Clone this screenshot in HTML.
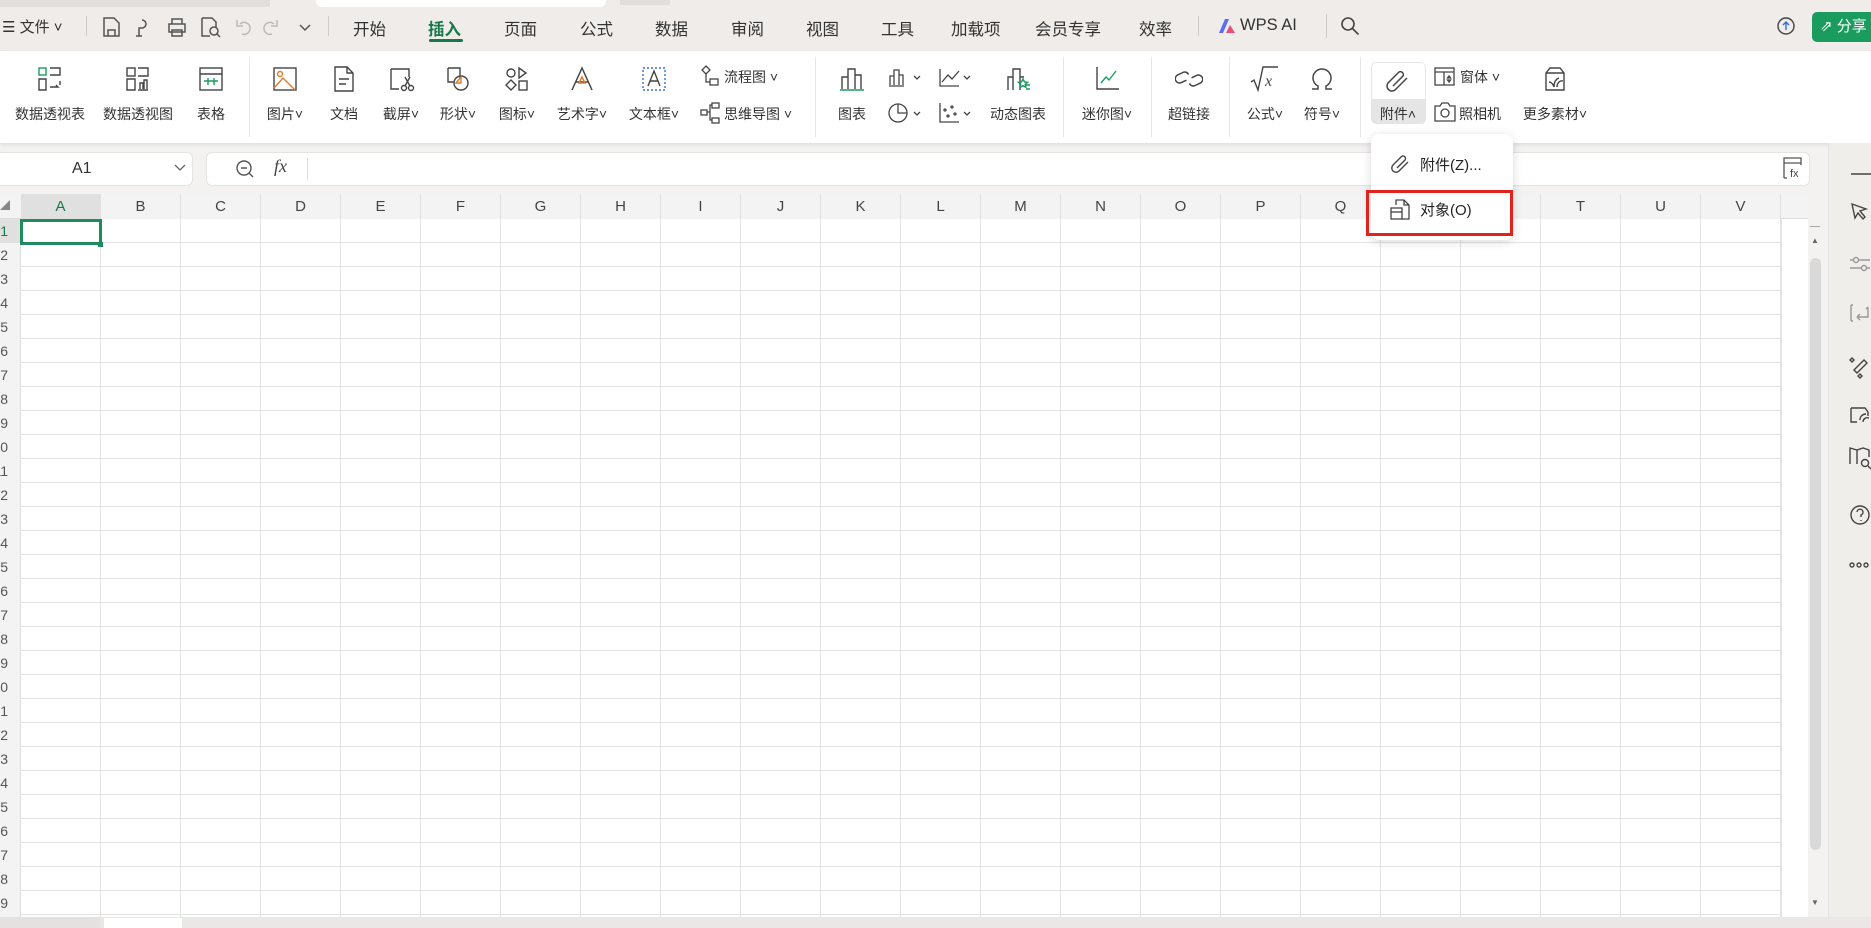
<!DOCTYPE html>
<html><head><meta charset="utf-8">
<style>
*{margin:0;padding:0;box-sizing:border-box}
body{width:1871px;height:928px;overflow:hidden;background:#f3f2f1;font-family:"Liberation Sans","Noto Sans CJK SC",sans-serif;color:#222;position:relative}
.abs{position:absolute}
#top{left:0;top:0;width:1871px;height:51px;background:#efece9}
.t{position:absolute;top:16px;font-size:16.5px;color:#333;white-space:nowrap}
#ribbon{left:0;top:51px;width:1871px;height:92px;background:#fff;box-shadow:0 2px 4px rgba(0,0,0,.08)}
.lbl{position:absolute;top:53px;font-size:14px;color:#333;white-space:nowrap;transform:translateX(-50%)}
.ic{position:absolute;top:14px;transform:translateX(-50%)}
.sep{position:absolute;top:6px;width:1px;height:80px;background:#e6e6e6}
svg{display:block}
.grid{left:21px;top:219px;width:1760px;height:698px;background-color:#fff;
background-image:linear-gradient(to right,#e3e3e3 1px,transparent 1px),linear-gradient(to bottom,#e3e3e3 1px,transparent 1px);
background-size:80px 24px;background-position:-1px -1px}
.ch{position:absolute;top:194px;height:25px;width:80px;text-align:center;font-size:15px;line-height:25px;color:#444;border-right:1px solid #e0e0e0;background:#f3f3f3}
.rh{position:absolute;left:-22px;width:30px;text-align:right;font-size:14px;color:#555;height:24px;line-height:24px}
</style></head><body>
<div id="top" class="abs">
  <div class="abs" style="left:0;top:0;width:270px;height:7px;background:#e2dedb"></div>
  <div class="abs" style="left:316px;top:0;width:290px;height:7px;background:#fff;border-radius:0 0 6px 6px"></div>
  <div class="abs" style="left:620px;top:0;width:50px;height:5px;background:#e2dedb"></div>
  <div class="t" style="left:2px;font-size:15px">☰ 文件 ˅</div>
  <div class="abs" style="left:86px;top:16px;width:1px;height:20px;background:#ccc"></div>
  <svg class="abs" style="left:102px;top:16px" width="210" height="22" stroke="#555" fill="none" stroke-width="1.5">
    <path d="M2 2h10l5 5v13H2z M6 20v-6h7v6"/>
    <path d="M40 4a4 4 0 1 1 0 8h-3v8 M34 20h6"/>
    <path d="M67 8h16v8H67z M70 8V3h10v5 M70 14h10v6H70z"/>
    <path d="M100 2h10l4 4v6 M100 2v18h8"/><circle cx="112" cy="15" r="4"/><path d="M115 18l3 3"/>
    <path d="M138 8a6 6 0 1 1 2 10 M135 4v6h6" stroke="#bbb"/>
    <path d="M172 8a6 6 0 1 0-2 10 M175 4v6h-6" stroke="#bbb"/>
    <path d="M198 9l5 5 5-5"/>
  </svg>
  <div class="abs" style="left:328px;top:16px;width:1px;height:20px;background:#ccc"></div>
  <div class="t" style="left:353px">开始</div>
  <div class="t" style="left:428px;color:#17784a;font-weight:bold">插入</div>
  <div class="abs" style="left:429px;top:39px;width:34px;height:3px;background:#17784a;border-radius:2px"></div>
  <div class="t" style="left:504px">页面</div>
  <div class="t" style="left:580px">公式</div>
  <div class="t" style="left:655px">数据</div>
  <div class="t" style="left:731px">审阅</div>
  <div class="t" style="left:806px">视图</div>
  <div class="t" style="left:881px">工具</div>
  <div class="t" style="left:951px">加载项</div>
  <div class="t" style="left:1035px">会员专享</div>
  <div class="t" style="left:1139px">效率</div>
  <div class="abs" style="left:1198px;top:16px;width:1px;height:20px;background:#ccc"></div>
  <svg class="abs" style="left:1218px;top:18px" width="18" height="16"><path d="M1 15L7 1h4L5 15z" fill="#5b6cf7"/><path d="M8 15l4-8 5 8z" fill="#e94b7a"/></svg>
  <div class="t" style="left:1240px">WPS AI</div>
  <div class="abs" style="left:1326px;top:14px;width:1px;height:24px;background:#ccc"></div>
  <svg class="abs" style="left:1340px;top:16px" width="20" height="20" stroke="#444" fill="none" stroke-width="1.6"><circle cx="8" cy="8" r="6"/><path d="M12.5 12.5l6 6"/></svg>
  <svg class="abs" style="left:1776px;top:16px" width="20" height="20" stroke="#444" fill="none" stroke-width="1.4"><circle cx="10" cy="10" r="8"/><path d="M10 14V6M7 9l3-3 3 3" stroke="#2f6fe0"/></svg>
  <div class="abs" style="left:1812px;top:12px;width:70px;height:30px;background:#1a9c5f;border-radius:5px;color:#fff;font-size:15px;line-height:30px;padding-left:8px">⇗ 分享</div>
</div>

<div id="ribbon" class="abs">
  <!-- group 1 -->
  <svg class="ic" style="left:50px" width="28" height="28" stroke="#444" fill="none" stroke-width="1.4"><rect x="3" y="3" width="7" height="7" stroke="#1a9c5f"/><path d="M14 3h10v7H14 M3 14v11h7V14z M14 22h8l-2-2 M24 16v4"/></svg>
  <div class="lbl" style="left:50px">数据透视表</div>
  <svg class="ic" style="left:138px" width="28" height="28" stroke="#444" fill="none" stroke-width="1.4"><rect x="3" y="3" width="8" height="8"/><path d="M14 3h10v8H14 M3 14v11h8V14z M14 25h10 M16 24v-6h3v6 M20 24v-9h3v9"/></svg>
  <div class="lbl" style="left:138px">数据透视图</div>
  <svg class="ic" style="left:211px" width="28" height="28" stroke="#444" fill="none" stroke-width="1.4"><rect x="3" y="3" width="22" height="22"/><path d="M3 9h22"/><path d="M7 16h14M11 13v7M17 13v7" stroke="#1a9c5f"/></svg>
  <div class="lbl" style="left:211px">表格</div>
  <div class="sep" style="left:249px"></div>
  <svg class="ic" style="left:285px" width="28" height="28" stroke="#444" fill="none" stroke-width="1.4"><rect x="3" y="3" width="22" height="22"/><circle cx="9" cy="9" r="2.5" stroke="#e07b2c"/><path d="M3 23l9-10 12 12" stroke="#e07b2c"/></svg>
  <div class="lbl" style="left:285px">图片˅</div>
  <svg class="ic" style="left:344px" width="28" height="28" stroke="#444" fill="none" stroke-width="1.4"><path d="M5 2h12l6 6v18H5z M17 2v6h6 M9 14h10M9 19h7"/></svg>
  <div class="lbl" style="left:344px">文档</div>
  <svg class="ic" style="left:401px" width="28" height="28" stroke="#444" fill="none" stroke-width="1.4"><path d="M4 4h18v8 M4 4v20h8" /><circle cx="17" cy="23" r="2.5"/><circle cx="24" cy="23" r="2.5"/><path d="M18 21l5-9M23 21l-5-9"/></svg>
  <div class="lbl" style="left:401px">截屏˅</div>
  <svg class="ic" style="left:458px" width="28" height="28" stroke="#444" fill="none" stroke-width="1.4"><path d="M4 3h12v10 M4 3v14h6"/><circle cx="17" cy="18" r="7"/><path d="M12 18l5-6v6z" stroke="#e07b2c"/></svg>
  <div class="lbl" style="left:458px">形状˅</div>
  <svg class="ic" style="left:517px" width="28" height="28" stroke="#444" fill="none" stroke-width="1.4"><circle cx="8" cy="8" r="4"/><path d="M16 3l7 5-7 5z M3 20l5-5 5 5-5 5z"/><rect x="16" y="16" width="8" height="9"/></svg>
  <div class="lbl" style="left:517px">图标˅</div>
  <svg class="ic" style="left:582px" width="28" height="28" stroke="#444" fill="none" stroke-width="1.5"><path d="M4 25L14 3l10 22 M8 17h12"/><path d="M11 18l3-6 3 6z" stroke="#e07b2c"/></svg>
  <div class="lbl" style="left:582px">艺术字˅</div>
  <svg class="ic" style="left:654px" width="28" height="28" stroke="#444" fill="none" stroke-width="1.4"><rect x="3" y="3" width="22" height="22" stroke="#3a6fd8" stroke-dasharray="2 2"/><path d="M8 21l6-15 6 15M10 16h8"/></svg>
  <div class="lbl" style="left:654px">文本框˅</div>
  <svg class="abs" style="left:700px;top:14px" width="22" height="22" stroke="#444" fill="none" stroke-width="1.3"><path d="M6 1l4 4-4 4-4-4z"/><rect x="10" y="14" width="8" height="6"/><path d="M6 9v8h4"/></svg>
  <div class="abs" style="left:724px;top:16px;font-size:14px;color:#333">流程图 ˅</div>
  <svg class="abs" style="left:700px;top:50px" width="22" height="24" stroke="#444" fill="none" stroke-width="1.3"><rect x="1" y="9" width="6" height="5"/><rect x="12" y="2" width="7" height="5"/><rect x="12" y="17" width="7" height="5"/><path d="M7 11h3V4h2M10 11v8h2"/></svg>
  <div class="abs" style="left:724px;top:53px;font-size:14px;color:#333">思维导图 ˅</div>
  <div class="sep" style="left:815px"></div>
  <svg class="ic" style="left:852px" width="28" height="28" stroke="#444" fill="none" stroke-width="1.4"><path d="M4 24V12h6v12 M10 24V4h7v20 M17 24V10h6v14"/><path d="M2 25h24" stroke="#1a9c5f"/></svg>
  <div class="lbl" style="left:852px">图表</div>
  <svg class="abs" style="left:888px;top:16px" width="36" height="22" stroke="#444" fill="none" stroke-width="1.3"><path d="M2 18V9h4v9 M6 18V3h5v15 M11 18V8h4v10 M1 19h15 M26 9l3 3 3-3"/></svg>
  <svg class="abs" style="left:888px;top:50px" width="36" height="24" stroke="#444" fill="none" stroke-width="1.3"><circle cx="10" cy="12" r="9"/><path d="M10 3v9h9"/><path d="M26 11l3 3 3-3"/></svg>
  <svg class="abs" style="left:938px;top:16px" width="36" height="22" stroke="#444" fill="none" stroke-width="1.3"><path d="M2 2v17h19 M4 15l6-7 4 4 7-8"/><path d="M26 9l3 3 3-3"/></svg>
  <svg class="abs" style="left:938px;top:50px" width="36" height="24" stroke="#444" fill="none" stroke-width="1.3"><path d="M2 2v19h19"/><circle cx="7" cy="9" r="1"/><circle cx="14" cy="6" r="1"/><circle cx="10" cy="15" r="1"/><circle cx="17" cy="13" r="1"/><path d="M26 11l3 3 3-3"/></svg>
  <svg class="ic" style="left:1018px" width="28" height="28" stroke="#444" fill="none" stroke-width="1.4"><path d="M4 25V12h5v13 M9 25V4h7v21 M16 12h4"/><path d="M19 14l1.5 3 3 .3-2.3 2 .7 3-2.9-1.6-2.9 1.6.7-3-2.3-2 3-.3z" stroke="#1a9c5f"/><path d="M22 24h4M22 20h4" stroke="#1a9c5f"/></svg>
  <div class="lbl" style="left:1018px">动态图表</div>
  <div class="sep" style="left:1063px"></div>
  <svg class="ic" style="left:1107px" width="28" height="28" stroke="#444" fill="none" stroke-width="1.4"><path d="M4 2v22h22"/><path d="M8 18l5-6 3 3 7-9" stroke="#1a9c5f"/></svg>
  <div class="lbl" style="left:1107px">迷你图˅</div>
  <div class="sep" style="left:1151px"></div>
  <svg class="ic" style="left:1189px" width="28" height="28" stroke="#444" fill="none" stroke-width="1.5"><path d="M12 16l-4 4a4 4 0 0 1-6-6l4-4a4 4 0 0 1 6 0 M16 12l4-4a4 4 0 0 1 6 6l-4 4a4 4 0 0 1-6 0" transform="rotate(20 14 14)"/></svg>
  <div class="lbl" style="left:1189px">超链接</div>
  <div class="sep" style="left:1229px"></div>
  <svg class="ic" style="left:1265px" width="30" height="28" stroke="#444" fill="none" stroke-width="1.4"><path d="M1 17l3-2 4 10 5-23h15"/><text x="15" y="21" font-family="Liberation Serif" font-style="italic" font-size="16" fill="#444" stroke="none">x</text></svg>
  <div class="lbl" style="left:1265px">公式˅</div>
  <svg class="ic" style="left:1322px" width="28" height="28" stroke="#444" fill="none" stroke-width="1.5"><path d="M4 24h6v-3a9 9 0 1 1 8 0v3h6"/></svg>
  <div class="lbl" style="left:1322px">符号˅</div>
  <div class="sep" style="left:1360px"></div>
  <div class="abs" style="left:1371px;top:11px;width:55px;height:62px;border:1px solid #e6e6e6;border-radius:5px"></div>
  <div class="abs" style="left:1371px;top:48px;width:55px;height:25px;background:#e5e5e5;border-radius:0 0 5px 5px"></div>
  <svg class="ic" style="left:1398px" width="28" height="28" stroke="#444" fill="none" stroke-width="1.5"><path d="M9 21l10-10a3 3 0 0 0-4-4L4 18a5 5 0 0 0 7 7l12-12"/></svg>
  <div class="lbl" style="left:1398px">附件˄</div>
  <svg class="abs" style="left:1434px;top:16px" width="22" height="20" stroke="#444" fill="none" stroke-width="1.3"><rect x="1" y="1" width="19" height="17"/><path d="M1 5h19M10 5v13 M15 9l-1.5 2h3zM15 15l-1.5-2h3z"/></svg>
  <div class="abs" style="left:1460px;top:16px;font-size:14px;color:#333">窗体 ˅</div>
  <svg class="abs" style="left:1434px;top:51px" width="22" height="20" stroke="#444" fill="none" stroke-width="1.3"><path d="M1 4h5l2-3h6l2 3h5v15H1z"/><circle cx="11" cy="11" r="4"/></svg>
  <div class="abs" style="left:1459px;top:53px;font-size:14px;color:#333">照相机</div>
  <svg class="ic" style="left:1555px" width="28" height="28" stroke="#444" fill="none" stroke-width="1.4"><path d="M5 25V8l4-5h10l4 5v17z M5 8h18"/><path d="M13 22c0-5 2-8 5-9M16 22c0-4 3-7 6-6M13 22c-1-3-3-5-5-5" stroke="#444"/></svg>
  <div class="lbl" style="left:1555px">更多素材˅</div>
</div>

<!-- formula bar -->
<div class="abs" style="left:-5px;top:152px;width:198px;height:34px;background:#fff;border-radius:6px;border:1px solid #e4e4e4"></div>
<div class="abs" style="left:72px;top:160px;font-size:16px;color:#333">A1</div>
<svg class="abs" style="left:174px;top:163px" width="12" height="10" stroke="#666" fill="none" stroke-width="1.3"><path d="M1 2l5 5 5-5"/></svg>
<div class="abs" style="left:206px;top:152px;width:1604px;height:34px;background:#fff;border-radius:6px;border:1px solid #e4e4e4"></div>
<svg class="abs" style="left:235px;top:159px" width="20" height="20" stroke="#555" fill="none" stroke-width="1.4"><circle cx="9" cy="9" r="7"/><path d="M6 9h6 M14 14l4 4"/></svg>
<div class="abs" style="left:274px;top:156px;font-size:18px;font-style:italic;font-family:'Liberation Serif',serif;color:#444">fx</div>
<div class="abs" style="left:307px;top:158px;width:1px;height:22px;background:#ddd"></div>
<svg class="abs" style="left:1781px;top:156px" width="22" height="24" stroke="#555" fill="none" stroke-width="1.3"><path d="M3 22V2h17v7 M3 7h17 M3 22h3"/><text x="9" y="21" font-size="11" fill="#444" stroke="none" font-family="Liberation Sans">fx</text></svg>

<!-- column headers -->
<div class="abs" style="left:0;top:194px;width:1808px;height:25px;background:#f3f3f3;border-bottom:1px solid #ddd"></div>
<div class="abs" style="left:0;top:194px;width:21px;height:25px;font-size:10px;line-height:25px;color:#888">◢</div>
<div class="ch" style="left:21px;background:#e0e0e0;color:#17784a">A</div>
<div class="ch" style="left:101px">B</div><div class="ch" style="left:181px">C</div><div class="ch" style="left:261px">D</div><div class="ch" style="left:341px">E</div><div class="ch" style="left:421px">F</div><div class="ch" style="left:501px">G</div><div class="ch" style="left:581px">H</div><div class="ch" style="left:661px">I</div><div class="ch" style="left:741px">J</div><div class="ch" style="left:821px">K</div><div class="ch" style="left:901px">L</div><div class="ch" style="left:981px">M</div><div class="ch" style="left:1061px">N</div><div class="ch" style="left:1141px">O</div><div class="ch" style="left:1221px">P</div><div class="ch" style="left:1301px">Q</div><div class="ch" style="left:1381px">R</div><div class="ch" style="left:1461px">S</div><div class="ch" style="left:1541px">T</div><div class="ch" style="left:1621px">U</div><div class="ch" style="left:1701px">V</div>

<!-- grid -->
<div class="abs grid"></div>
<div class="abs" style="left:1781px;top:219px;width:27px;height:698px;background:#fff;border-left:1px solid #e3e3e3"></div>
<div class="abs" style="left:0;top:219px;width:21px;height:698px;background:#f3f3f3;border-right:1px solid #ddd;overflow:hidden">
 <div class="abs" style="left:0;top:0;width:21px;height:24px;background:#e0e0e0"></div>
 <div class="rh" style="top:0;color:#17784a">1</div><div class="rh" style="top:24px">2</div><div class="rh" style="top:48px">3</div><div class="rh" style="top:72px">4</div><div class="rh" style="top:96px">5</div><div class="rh" style="top:120px">6</div><div class="rh" style="top:144px">7</div><div class="rh" style="top:168px">8</div><div class="rh" style="top:192px">9</div><div class="rh" style="top:216px">10</div><div class="rh" style="top:240px">11</div><div class="rh" style="top:264px">12</div><div class="rh" style="top:288px">13</div><div class="rh" style="top:312px">14</div><div class="rh" style="top:336px">15</div><div class="rh" style="top:360px">16</div><div class="rh" style="top:384px">17</div><div class="rh" style="top:408px">18</div><div class="rh" style="top:432px">19</div><div class="rh" style="top:456px">20</div><div class="rh" style="top:480px">21</div><div class="rh" style="top:504px">22</div><div class="rh" style="top:528px">23</div><div class="rh" style="top:552px">24</div><div class="rh" style="top:576px">25</div><div class="rh" style="top:600px">26</div><div class="rh" style="top:624px">27</div><div class="rh" style="top:648px">28</div><div class="rh" style="top:672px">29</div>
</div>
<div class="abs" style="left:20px;top:219px;width:82px;height:26px;border:3px solid #1e8c5e"></div>
<div class="abs" style="left:98px;top:242px;width:5px;height:5px;background:#1e8c5e"></div>

<!-- scrollbar -->
<div class="abs" style="left:1810px;top:226px;width:10px;height:1px;background:#aaa"></div>
<div class="abs" style="left:1811px;top:236px;font-size:8px;color:#666">▲</div>
<div class="abs" style="left:1810px;top:258px;width:11px;height:592px;background:#d9d9d9;border-radius:6px"></div>
<div class="abs" style="left:1811px;top:898px;font-size:8px;color:#666">▼</div>

<!-- sidebar -->
<div class="abs" style="left:1828px;top:143px;width:43px;height:785px;background:#f0eeeb;border-left:1px solid #e3e3e3"></div>
<svg class="abs" style="left:1848px;top:160px" width="23" height="430" stroke="#444" fill="none" stroke-width="1.4">
  <path d="M3 14h20"/>
  <path d="M4 44l14 5-6 2 5 6-2 2-5-6-3 5z"/>
  <g stroke="#999"><path d="M2 100h20M2 108h20"/><circle cx="8" cy="100" r="2.5" fill="#f0eeeb"/><circle cx="16" cy="108" r="2.5" fill="#f0eeeb"/></g>
  <g stroke="#999"><path d="M3 145v16 M3 145h2 M3 161h2 M9 157h11v-10 M9 157l3-3M9 157l3 3 M20 147l-2 2"/></g>
  <path d="M6 210l10-10 3 3-10 10z M4 198l2 2-2 2-2-2z M12 214l2 2-2 2-2-2z"/>
  <path d="M3 248v14h6 M3 248h14l3 4v4 M12 260c0-4 3-6 6-6 M15 262c0-3 3-5 6-4"/>
  <path d="M2 304v-16l7 2 6-2 6 2v7 M9 290v14"/><circle cx="17" cy="303" r="3.5"/><path d="M20 306l3 3"/>
  <circle cx="12" cy="355" r="9"/><path d="M9 352a3 3 0 1 1 4 3v2 M13 360v1"/>
  <circle cx="4" cy="405" r="2"/><circle cx="11" cy="405" r="2"/><circle cx="18" cy="405" r="2"/>
</svg>

<!-- bottom sheet bar -->
<div class="abs" style="left:0;top:917px;width:1871px;height:11px;background:#ece7e7"></div>
<div class="abs" style="left:0;top:917px;width:100px;height:11px;background:#e4e1e1"></div>
<div class="abs" style="left:104px;top:918px;width:78px;height:10px;background:#fff"></div>

<!-- dropdown -->
<div class="abs" style="left:1371px;top:134px;width:142px;height:106px;background:#fff;border-radius:8px;box-shadow:0 2px 10px rgba(0,0,0,.15)"></div>
<svg class="abs" style="left:1390px;top:153px" width="22" height="22" stroke="#444" fill="none" stroke-width="1.4"><path d="M7 15l8-8a2.5 2.5 0 0 0-3.5-3.5L3 12a4 4 0 0 0 6 6l9-9"/></svg>
<div class="abs" style="left:1420px;top:154px;font-size:15px;color:#222">附件(Z)...</div>
<div class="abs" style="left:1366px;top:190px;width:147px;height:46px;border:3px solid #e0231c"></div>
<svg class="abs" style="left:1389px;top:199px" width="22" height="24" stroke="#444" fill="none" stroke-width="1.3"><path d="M7 6V1h8l5 5v14H13 M15 1v5h5"/><rect x="2" y="9" width="11" height="11"/><path d="M2 13h11"/></svg>
<div class="abs" style="left:1420px;top:199px;font-size:15px;color:#222">对象(O)</div>
</body></html>
